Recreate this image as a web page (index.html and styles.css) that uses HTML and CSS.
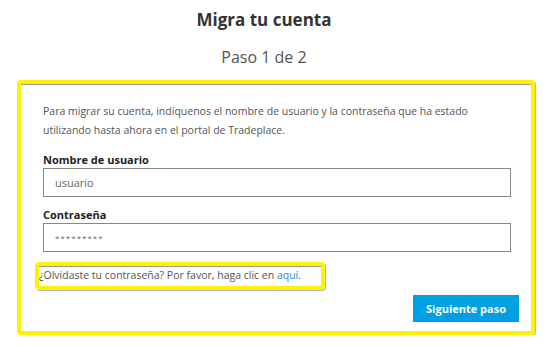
FILE: index.html
```html
<!DOCTYPE html>
<html lang="es">
<head>
  <meta charset="UTF-8">
  <title>Migra tu cuenta</title>
  <link rel="stylesheet" href="styles.css">
</head>
<body>

<h1>Migra tu cuenta</h1>
<h2>Paso 1 de 2</h2>

<div class="tarjeta">
  <p class="intro">Para migrar su cuenta, indíquenos el nombre de usuario y la contraseña que ha estado utilizando hasta ahora en el portal de Tradeplace.</p>

  <label for="usuario">Nombre de usuario</label>
  <input id="usuario" type="text" value="usuario">

  <label for="clave">Contraseña</label>
  <input id="clave" type="text" class="clave" value="*********">

  <div class="olvido">¿Olvidaste tu contraseña? Por favor, haga clic en <a href="#">aquí</a>.</div>

  <div class="acciones">
    <button>Siguiente paso</button>
  </div>
</div>

</body>
</html>
```

FILE: styles.css
```css
body {
  font-family: 'Open Sans', 'Liberation Sans', sans-serif;
  background: #fff;
  margin: 0;
  padding: 8px 13px 0 17px;
  color: #555;
}

h1 {
  margin: 0;
  padding-right: 24px;
  font-size: 17px;
  line-height: 24px;
  font-weight: bold;
  color: #333;
  text-align: center;
}

h2 {
  margin: 13px 0 0 0;
  padding-right: 24px;
  font-size: 16px;
  line-height: 24px;
  font-weight: normal;
  color: #555;
  text-align: center;
}

.tarjeta {
  margin-top: 11px;
  border: 4px solid #fff200;
  border-radius: 4px;
  box-shadow: inset 0 1px 0 #9a9a9a, 1px 1px 1px #b0b0b0;
  padding: 18px 20px 9px 22px;
}

.intro {
  margin: 0 0 12px 0;
  font-size: 10.5px;
  line-height: 19px;
}

label {
  display: block;
  font-size: 11px;
  line-height: 16px;
  font-weight: bold;
  color: #222;
}

input[type="text"] {
  display: block;
  box-sizing: border-box;
  width: 100%;
  height: 29px;
  padding: 0 11px;
  border: 1px solid #888;
  border-radius: 0;
  font-family: inherit;
  font-size: 11px;
  color: #666;
  margin-bottom: 10px;
}

.clave {
  font-size: 8px !important;
  letter-spacing: 1px;
}

.olvido {
  margin: 0 0 0 -8px;
  width: 282px;
  border: 4px solid #fff200;
  border-radius: 4px;
  box-shadow: inset 0 1px 0 #9a9a9a, 1px 1px 1px #b0b0b0;
  padding: 2px 0 3px 0;
  font-size: 10.5px;
  line-height: 15px;
  white-space: nowrap;
}

.olvido a {
  color: #1a8dd0;
  text-decoration: none;
}

.acciones {
  display: flex;
  justify-content: flex-end;
  margin: 5px -8px 0 0;
}

button {
  background-color: #00a0e3;
  border: none;
  color: white;
  font-family: inherit;
  font-size: 11px;
  font-weight: bold;
  width: 106px;
  height: 27px;
  cursor: pointer;
}
```
